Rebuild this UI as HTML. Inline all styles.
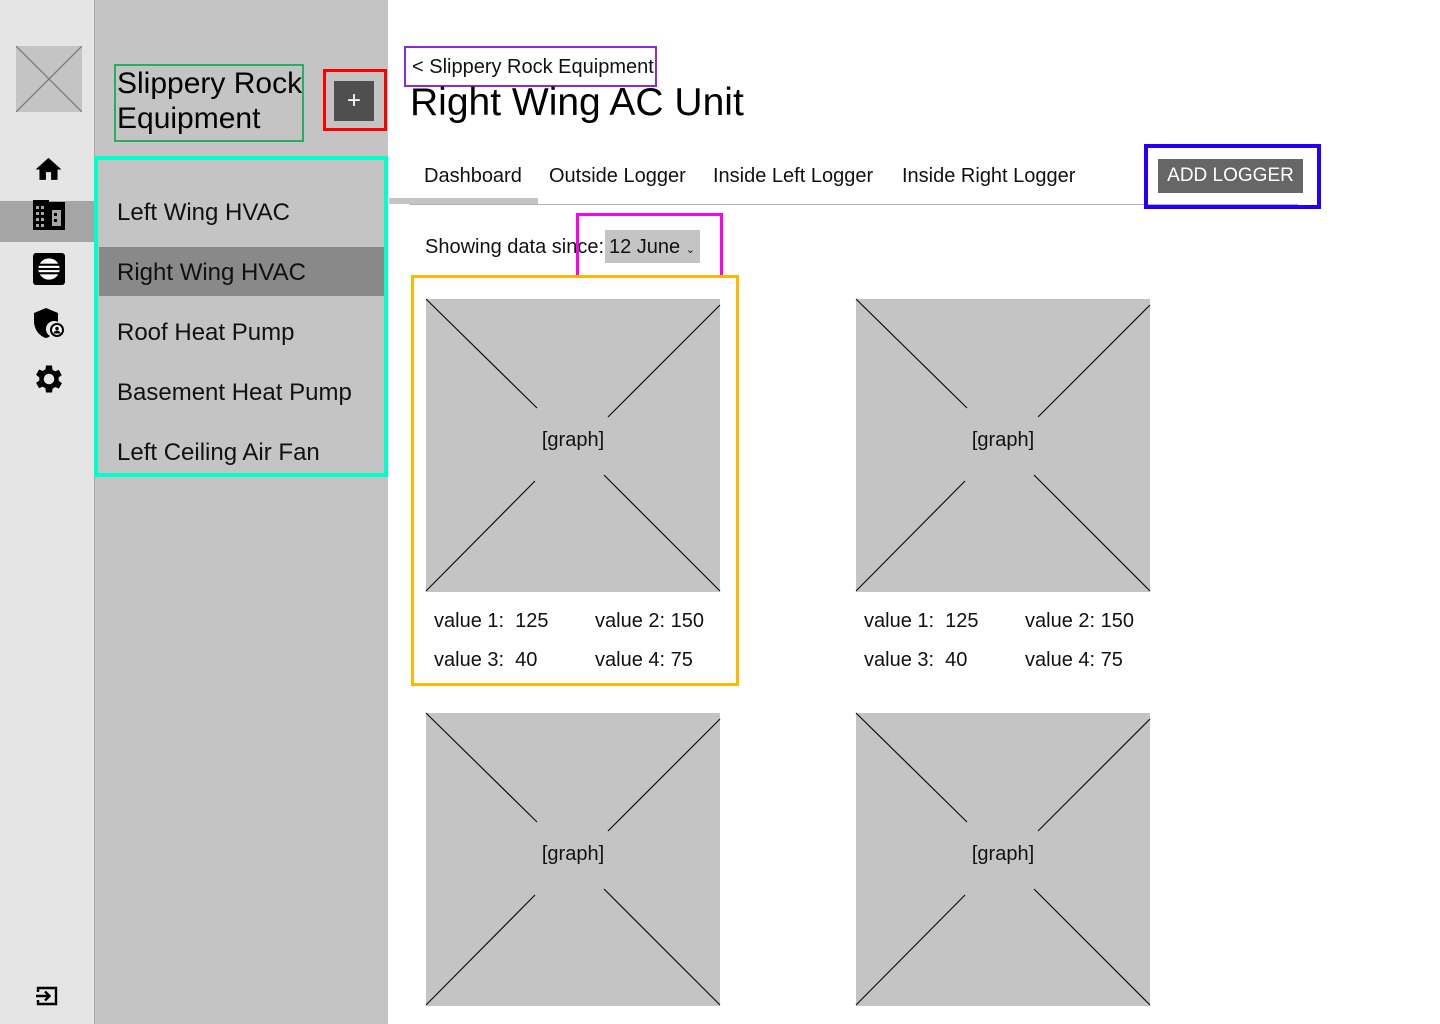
<!DOCTYPE html>
<html><head><meta charset="utf-8"><style>
*{margin:0;padding:0;box-sizing:border-box}
body{width:1440px;height:1024px;position:relative;background:#fff;font-family:"Liberation Sans",Roboto,sans-serif;color:#111;overflow:hidden}
.abs{position:absolute}
.t{position:absolute;white-space:nowrap}
</style></head><body>
<!-- rail -->
<div class="abs" style="left:0;top:0;width:94px;height:1024px;background:#e5e5e5"></div>
<div class="abs" style="left:94px;top:0;width:1px;height:1024px;background:#aaa"></div>
<div class="abs" style="left:0;top:201px;width:94px;height:41px;background:#a6a6a6"></div>
<svg class="abs" style="left:16px;top:46px" width="66" height="66"><rect width="66" height="66" fill="#c4c4c4"/><line x1="0" y1="0" x2="66" y2="66" stroke="#777" stroke-width="1.2"/><line x1="66" y1="0" x2="0" y2="66" stroke="#777" stroke-width="1.2"/></svg>
<!-- home -->
<svg class="abs" style="left:33px;top:154px" width="31" height="31" viewBox="0 0 24 24"><path d="M10 20v-6h4v6h5v-8h3L12 3 2 12h3v8z" fill="#000"/></svg>
<!-- building -->
<svg class="abs" style="left:33px;top:200px" width="32" height="30" viewBox="0 0 32 30"><rect x="0" y="2" width="32" height="28" fill="#000"/><rect x="0" y="0" width="16" height="4" fill="#000"/><g fill="#a6a6a6"><rect x="3" y="6" width="3" height="3"/><rect x="8" y="6" width="3" height="3"/><rect x="3" y="12" width="3" height="3"/><rect x="8" y="12" width="3" height="3"/><rect x="3" y="18" width="3" height="3"/><rect x="8" y="18" width="3" height="3"/><rect x="3" y="24" width="3" height="3"/><rect x="8" y="24" width="3" height="3"/><rect x="19" y="10" width="9" height="16"/></g><g fill="#000"><rect x="21" y="13" width="3" height="3"/><rect x="21" y="19" width="3" height="3"/></g></svg>
<!-- list square -->
<svg class="abs" style="left:33px;top:253px" width="32" height="32" viewBox="0 0 30 30"><rect width="30" height="30" rx="3" fill="#000"/><circle cx="15" cy="15" r="10" fill="#fff"/><g fill="#000"><rect x="5" y="10" width="20" height="2"/><rect x="5" y="14" width="20" height="2"/><rect x="5" y="18" width="20" height="2"/></g></svg>
<!-- shield -->
<svg class="abs" style="left:33px;top:308px" width="32" height="32" viewBox="0 0 32 32"><path d="M13 0L1 5v8c0 8 5 15 12 17 2-.5 3-1 4-2a8 8 0 0 1 8-14V5z" fill="#000"/><circle cx="24" cy="22" r="7" fill="#000"/><circle cx="24" cy="22" r="5" fill="#fff"/><circle cx="24" cy="20.5" r="1.8" fill="#000"/><path d="M20.5 25.5a3.5 3 0 0 1 7 0z" fill="#000"/></svg>
<!-- gear -->
<svg class="abs" style="left:31px;top:361px" width="36" height="36" viewBox="0 0 24 24"><path d="M19.4 13a7.5 7.5 0 0 0 0-2l2.1-1.6-2-3.5-2.5 1a7 7 0 0 0-1.7-1L15 3h-4l-.4 2.7a7 7 0 0 0-1.7 1l-2.5-1-2 3.5L6.6 11a7.5 7.5 0 0 0 0 2l-2.2 1.6 2 3.5 2.5-1a7 7 0 0 0 1.7 1L11 21h4l.4-2.7a7 7 0 0 0 1.7-1l2.5 1 2-3.5zM13 15.5a3.5 3.5 0 1 1 0-7 3.5 3.5 0 0 1 0 7z" fill="#000" transform="translate(-1 0)"/></svg>
<!-- logout -->
<svg class="abs" style="left:35px;top:984px" width="24" height="24" viewBox="0 0 24 24"><path d="M3 8V4h18v16H3v-4" fill="none" stroke="#000" stroke-width="2.4"/><path d="M1 12h13M10 7.5l4.5 4.5-4.5 4.5" fill="none" stroke="#000" stroke-width="2.4"/></svg>

<!-- second panel -->
<div class="abs" style="left:95px;top:0;width:293px;height:1024px;background:#c4c4c4"></div>
<div class="abs" style="left:114px;top:64px;width:190px;height:78px;border:2px solid #27ae60"></div>
<div class="t" style="left:117px;top:66px;font-size:30px;line-height:35px;color:#000">Slippery Rock<br>Equipment</div>
<div class="abs" style="left:323px;top:69px;width:64px;height:62px;border:3px solid #f00;background:#c4c4c4"></div>
<div class="abs" style="left:334px;top:81px;width:40px;height:40px;background:#4f4f4f;color:#fff;font-size:24px;line-height:40px;text-align:center">+</div>
<div class="abs" style="left:94px;top:156px;width:294px;height:321px;border:4px solid #00ffcc"></div>
<div class="abs" style="left:99px;top:247px;width:285px;height:49px;background:#898989"></div>
<div class="t" style="left:117px;top:199px;font-size:24px;line-height:28px">Left Wing HVAC</div>
<div class="t" style="left:117px;top:259px;font-size:24px;line-height:28px">Right Wing HVAC</div>
<div class="t" style="left:117px;top:319px;font-size:24px;line-height:28px">Roof Heat Pump</div>
<div class="t" style="left:117px;top:379px;font-size:24px;line-height:28px">Basement Heat Pump</div>
<div class="t" style="left:117px;top:439px;font-size:24px;line-height:28px">Left Ceiling Air Fan</div>

<!-- main -->
<div class="abs" style="left:404px;top:46px;width:253px;height:41px;border:2px solid #8a2be2"></div>
<div class="t" style="left:412px;top:55px;font-size:20px;line-height:24px">&lt; Slippery Rock Equipment</div>
<div class="t" style="left:410px;top:80px;font-size:39px;line-height:46px;color:#000">Right Wing AC Unit</div>
<div class="t" style="left:424px;top:164px;font-size:20px;line-height:24px">Dashboard</div>
<div class="t" style="left:549px;top:164px;font-size:20px;line-height:24px">Outside Logger</div>
<div class="t" style="left:713px;top:164px;font-size:20px;line-height:24px">Inside Left Logger</div>
<div class="t" style="left:902px;top:164px;font-size:20px;line-height:24px">Inside Right Logger</div>
<div class="abs" style="left:410px;top:204px;width:888px;height:1px;background:#b0b0b0"></div>
<div class="abs" style="left:389px;top:198px;width:149px;height:6px;background:#c4c4c4"></div>
<div class="abs" style="left:1144px;top:144px;width:177px;height:65px;border:4px solid #2200ff"></div>
<div class="abs" style="left:1158px;top:159px;width:145px;height:34px;background:#666;color:#fff;font-size:19px;line-height:34px;text-align:center">ADD LOGGER</div>

<div class="abs" style="left:605px;top:230px;width:95px;height:33px;background:#c4c4c4"></div>
<div class="t" style="left:425px;top:235px;font-size:20px;line-height:24px">Showing data since:</div>
<div class="t" style="left:609px;top:235px;font-size:20px;line-height:24px">12 June <span style="font-size:11px">&#8964;</span></div>
<div class="abs" style="left:576px;top:213px;width:147px;height:62px;border:3px solid #ff00ee;border-bottom:none"></div>
<div class="abs" style="left:411px;top:275px;width:328px;height:411px;border:3px solid #ffb800"></div>

<svg class="abs" style="left:0;top:0" width="1440" height="1024">
<g stroke="#111" stroke-width="1.2">
<rect x="426" y="299" width="294" height="293" fill="#c4c4c4" stroke="none"/>
<rect x="856" y="299" width="294" height="293" fill="#c4c4c4" stroke="none"/>
<rect x="426" y="713" width="294" height="293" fill="#c4c4c4" stroke="none"/>
<rect x="856" y="713" width="294" height="293" fill="#c4c4c4" stroke="none"/>
<g><line x1="426" y1="299" x2="537" y2="408"/><line x1="720" y1="305" x2="608" y2="417"/><line x1="426" y1="591" x2="535" y2="481"/><line x1="604" y1="475" x2="720" y2="591"/></g>
<g transform="translate(430 0)"><line x1="426" y1="299" x2="537" y2="408"/><line x1="720" y1="305" x2="608" y2="417"/><line x1="426" y1="591" x2="535" y2="481"/><line x1="604" y1="475" x2="720" y2="591"/></g>
<g transform="translate(0 414)"><line x1="426" y1="299" x2="537" y2="408"/><line x1="720" y1="305" x2="608" y2="417"/><line x1="426" y1="591" x2="535" y2="481"/><line x1="604" y1="475" x2="720" y2="591"/></g>
<g transform="translate(430 414)"><line x1="426" y1="299" x2="537" y2="408"/><line x1="720" y1="305" x2="608" y2="417"/><line x1="426" y1="591" x2="535" y2="481"/><line x1="604" y1="475" x2="720" y2="591"/></g>
</g>
<g font-family="Liberation Sans, sans-serif" font-size="20" fill="#111" text-anchor="middle">
<text x="573" y="446">[graph]</text><text x="1003" y="446">[graph]</text>
<text x="573" y="860">[graph]</text><text x="1003" y="860">[graph]</text>
</g>
<g font-family="Liberation Sans, sans-serif" font-size="20" fill="#111">
<text x="434" y="627">value 1:&#160; 125</text><text x="595" y="627">value 2: 150</text>
<text x="434" y="666">value 3:&#160; 40</text><text x="595" y="666">value 4: 75</text>
<text x="864" y="627">value 1:&#160; 125</text><text x="1025" y="627">value 2: 150</text>
<text x="864" y="666">value 3:&#160; 40</text><text x="1025" y="666">value 4: 75</text>
</g>
</svg>
</body></html>
